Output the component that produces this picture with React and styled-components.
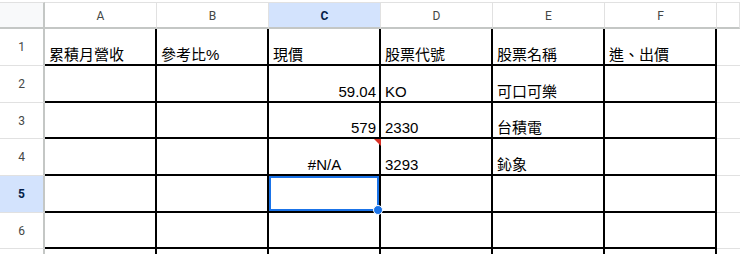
import styled, { createGlobalStyle } from "styled-components";
import { Fragment } from "react";

const GlobalStyle = createGlobalStyle`
  html, body {
    margin: 0;
    padding: 0;
    background: #ffffff;
  }
  body {
    font-family: "Liberation Sans", Arial, "Noto Sans CJK TC", sans-serif;
    overflow: hidden;
  }
`;

const Sheet = styled.div`
  width: 740px;
  height: 254px;
  overflow: hidden;
  padding-top: 2px;
  box-sizing: border-box;
  display: grid;
  grid-template-columns: 45px repeat(6, 112px) 1fr;
  grid-template-rows: 27px 37px 37px 36px 37px 37px 36px 37px;
`;

const Corner = styled.div`
  box-sizing: border-box;
  background: #f8f9fa;
  border-top: 1px solid #e1e1e1;
  border-right: 2px solid #c4c7c5;
  border-bottom: 2px solid #c4c7c5;
`;

const ColHead = styled.div`
  box-sizing: border-box;
  display: flex;
  align-items: center;
  justify-content: center;
  padding-top: 2px;
  font-family: Roboto, "Liberation Sans", sans-serif;
  font-size: 12px;
  color: ${(p) => (p.$active ? "#041e49" : "#444746")};
  font-weight: ${(p) => (p.$active ? 700 : 400)};
  background: ${(p) => (p.$active ? "#d3e3fd" : "#ffffff")};
  border-top: 1px solid #e1e1e1;
  border-right: 1px solid #e1e1e1;
  border-bottom: 2px solid #c4c7c5;
`;

const RowHead = styled.div`
  box-sizing: border-box;
  display: flex;
  align-items: center;
  justify-content: center;
  font-family: Roboto, "Liberation Sans", sans-serif;
  font-size: 12px;
  color: ${(p) => (p.$active ? "#041e49" : "#444746")};
  font-weight: ${(p) => (p.$active ? 700 : 400)};
  background: ${(p) => (p.$active ? "#d3e3fd" : "#ffffff")};
  border-right: 2px solid #c4c7c5;
  border-bottom: 1px solid #e1e1e1;
`;

const Cell = styled.div`
  position: relative;
  box-sizing: border-box;
  display: flex;
  align-items: flex-end;
  justify-content: ${(p) =>
    p.$align === "right" ? "flex-end" : p.$align === "center" ? "center" : "flex-start"};
  padding: 0 3px 1px 4px;
  font-size: 15px;
  line-height: 16px;
  color: #000000;
  white-space: nowrap;
  border-right: 2px solid #000000;
  border-bottom: 2px solid #000000;
`;

const BlankCell = styled.div`
  box-sizing: border-box;
  border-bottom: 1px solid #e1e1e1;
`;

const ErrorFlag = styled.span`
  position: absolute;
  top: 0;
  right: -2px;
  width: 0;
  height: 0;
  border-top: 7px solid #d93025;
  border-left: 7px solid transparent;
`;

const Selection = styled.div`
  position: absolute;
  inset: 0;
  border: 2px solid #1a73e8;
  pointer-events: none;
  z-index: 2;
`;

const Handle = styled.span`
  position: absolute;
  right: -6px;
  bottom: -6px;
  width: 8px;
  height: 8px;
  border-radius: 50%;
  background: #1a73e8;
  border: 1px solid #ffffff;
`;

const columns = ["A", "B", "C", "D", "E", "F"];

const rows = [
  [
    { v: "累積月營收" },
    { v: "參考比%" },
    { v: "現價" },
    { v: "股票代號" },
    { v: "股票名稱" },
    { v: "進、出價" },
  ],
  [{}, {}, { v: "59.04", a: "right" }, { v: "KO" }, { v: "可口可樂" }, {}],
  [{}, {}, { v: "579", a: "right" }, { v: "2330" }, { v: "台積電" }, {}],
  [{}, {}, { v: "#N/A", a: "center", err: true }, { v: "3293" }, { v: "鈊象" }, {}],
  [{}, {}, { sel: true }, {}, {}, {}],
  [{}, {}, {}, {}, {}, {}],
  [{}, {}, {}, {}, {}, {}],
];

export default function App() {
  return (
    <>
      <GlobalStyle />
      <Sheet>
        <Corner />
        {columns.map((c) => (
          <ColHead key={c} $active={c === "C"}>
            {c}
          </ColHead>
        ))}
        <ColHead />
        {rows.map((row, r) => (
          <Fragment key={r}>
            {/* row 7 is cut off by the window, its number sits below the fold */}
            <RowHead $active={r === 4}>{r < 6 ? r + 1 : ""}</RowHead>
            {row.map((cell, i) => (
              <Cell key={i} $align={cell.a}>
                {cell.v}
                {cell.err && <ErrorFlag />}
                {cell.sel && (
                  <Selection>
                    <Handle />
                  </Selection>
                )}
              </Cell>
            ))}
            <BlankCell />
          </Fragment>
        ))}
      </Sheet>
    </>
  );
}
